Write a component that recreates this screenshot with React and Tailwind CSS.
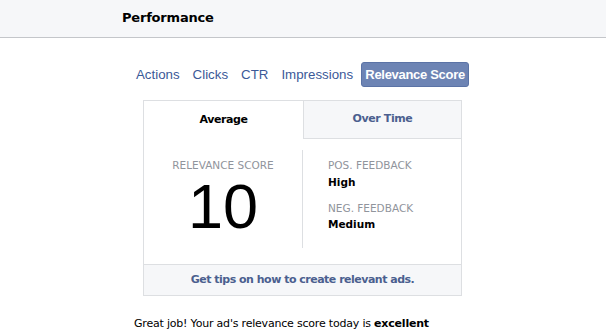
export default function App() {
  const tabs = ["Actions", "Clicks", "CTR", "Impressions"];
  return (
    <div className="w-[606px] h-[333px] overflow-hidden bg-white">
      <div className="h-[38px] bg-[#f6f7f9] border-b border-[#c4c6ca] flex items-center pl-[122px] pb-[1px]">
        <span className="font-['DejaVu_Sans',sans-serif] font-bold text-[13px] text-black tracking-[-0.2px]">Performance</span>
      </div>
      <div className="flex items-center h-[25px] mt-[24px] pl-[136px] font-['Liberation_Sans',sans-serif] text-[13.3px] text-[#3b5998]">
        {tabs.map((t) => (
          <span key={t} className="mr-[13px]">{t}</span>
        ))}
        <span className="ml-[-5px] h-[25px] w-[108px] justify-center flex items-center rounded-[3px] bg-[#6d84b4] border border-[#5b73a6] text-white text-[13px] font-bold tracking-[-0.3px]">Relevance Score</span>
      </div>
      <div className="ml-[143px] mt-[13px] w-[319px] border border-[#dddfe2] font-['DejaVu_Sans',sans-serif]">
        <div className="flex h-[38px] text-[11px] font-bold tracking-[-0.4px]">
          <div className="w-[159px] flex items-center justify-center text-black bg-white">Average</div>
          <div className="flex-1 flex items-center justify-center text-[#4b5f8f] bg-[#f6f7f9] border-l border-b border-[#dddfe2]">Over Time</div>
        </div>
        <div className="flex h-[125px] pt-[11px]">
          <div className="w-[159px] flex flex-col items-center border-r border-[#dddfe2] h-[98px]">
            <span className="text-[10.5px] text-[#90949c] mt-[8px] leading-[14px]">RELEVANCE SCORE</span>
            <span className="font-['Liberation_Sans',sans-serif] text-[63px] leading-[44px] text-black mt-[12px]">10</span>
          </div>
          <div className="flex-1 pl-[25px] pt-[8px] text-[10.5px] leading-[14px]">
            <div className="text-[#90949c]">POS. FEEDBACK</div>
            <div className="text-black font-bold mt-[3px]">High</div>
            <div className="text-[#90949c] mt-[12px]">NEG. FEEDBACK</div>
            <div className="text-black font-bold mt-[2px]">Medium</div>
          </div>
        </div>
        <div className="h-[31px] bg-[#f6f7f9] border-t border-[#dddfe2] flex items-center justify-center text-[11px] font-bold text-[#4b5f8f] tracking-[-0.5px]">
          Get tips on how to create relevant ads.
        </div>
      </div>
      <div className="ml-[134px] mt-[19px] w-[320px] font-['DejaVu_Sans',sans-serif] text-[11px] leading-[18px] tracking-[-0.2px] text-black">
        Great job! Your ad's relevance score today is <b>excellent</b> compared to other ads reaching the same audience.
      </div>
    </div>
  );
}
